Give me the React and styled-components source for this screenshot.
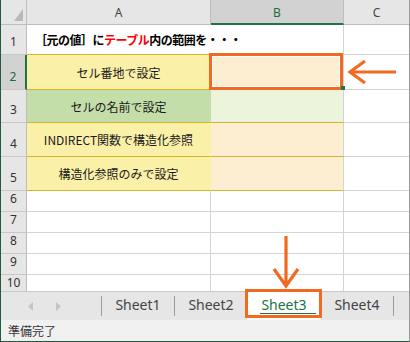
import React from 'react';
import styled, { createGlobalStyle } from 'styled-components';

const ORANGE = '#f26a21';
const GOLD = '#d4b428';
const GRID = '#d4d4d4';
const HEAD_LINE = '#bdbdbd';
const GREEN = '#217346';

const Global = createGlobalStyle`
  html, body { margin: 0; padding: 0; background: #fff; }
  body { font-family: "Noto Sans", "Noto Sans CJK JP", sans-serif; }
`;

const Window = styled.div`
  position: relative;
  width: 410px;
  height: 342px;
  box-sizing: border-box;
  border-left: 1px solid #1f5c3b;
  border-right: 1px solid #9a9a9a;
  border-bottom: 1px solid #1f5c3b;
  display: flex;
  flex-direction: column;
  overflow: hidden;
`;

const Sheet = styled.div`
  display: grid;
  grid-template-columns: 26px 184px 133px 65px;
  grid-template-rows: 25px 30px 35px 33px 34px 34px 21px 21px 21px 21px 21px;
  height: 291px;
  flex: none;
  overflow: hidden;
`;

const Corner = styled.div`
  box-sizing: border-box;
  background: #e6e6e6;
  border-right: 1px solid ${HEAD_LINE};
  border-bottom: 1px solid ${HEAD_LINE};
  display: flex;
  align-items: flex-end;
  justify-content: flex-end;
  padding: 0 3px 3px 0;
`;

const ColHead = styled.div`
  box-sizing: border-box;
  background: ${p => (p.$sel ? '#d2d2d2' : '#e6e6e6')};
  border-right: ${p => (p.$last ? 'none' : `1px solid ${HEAD_LINE}`)};
  border-bottom: ${p => (p.$sel ? `2px solid ${GREEN}` : `1px solid ${HEAD_LINE}`)};
  display: flex;
  align-items: center;
  justify-content: center;
  font: 12px "Noto Sans", sans-serif;
  color: ${p => (p.$sel ? '#1d6b40' : '#444')};
  padding-top: ${p => (p.$sel ? '1px' : '0')};
`;

const RowHead = styled.div`
  box-sizing: border-box;
  background: ${p => (p.$sel ? '#d2d2d2' : '#e6e6e6')};
  border-right: ${p => (p.$sel ? `2px solid ${GREEN}` : `1px solid ${HEAD_LINE}`)};
  border-bottom: 1px solid #c8c8c8;
  display: flex;
  align-items: flex-end;
  justify-content: center;
  padding-bottom: 5px;
  font: 12px "Noto Sans", sans-serif;
  line-height: 14px;
  color: ${p => (p.$sel ? '#1d6b40' : '#333')};
`;

const Cell = styled.div`
  box-sizing: border-box;
  position: relative;
  display: flex;
  align-items: center;
  justify-content: ${p => (p.$left ? 'flex-start' : 'center')};
  padding-left: ${p => (p.$left ? '8px' : '0')};
  background: ${p => p.$fill || '#fff'};
  border-right: ${p => (p.$noRight ? 'none' : `1px solid ${p.$rightColor || GRID}`)};
  border-bottom: 1px solid ${p => p.$bottomColor || GRID};
  font: 12px "Noto Sans CJK JP", sans-serif;
  color: #1a1a1a;
  white-space: nowrap;
`;

const Title = styled.span`
  font: 700 12px "Noto Sans CJK JP", sans-serif;
  letter-spacing: -0.5px;
  color: #000;
  position: relative;
  z-index: 1;
`;

const Red = styled.span`
  color: #ff0000;
`;

const Selection = styled.div`
  position: absolute;
  left: -2px;
  top: -2px;
  right: 0;
  bottom: -1px;
  border: 3px solid ${ORANGE};
  box-shadow: inset 0 0 0 1px #fff;
  z-index: 2;
`;

const FillHandle = styled.div`
  position: absolute;
  right: -5px;
  bottom: -3px;
  width: 4px;
  height: 4px;
  background: ${GREEN};
`;

const ArrowCell = styled(Cell)`
  justify-content: flex-start;
  padding-left: 3px;
`;

const DownArrow = styled.svg`
  position: absolute;
  left: 271px;
  top: 235px;
  z-index: 5;
`;

const TabBar = styled.div`
  box-sizing: border-box;
  height: 29px;
  flex: none;
  background: #e6e6e6;
  border-top: 1px solid #c8c8c8;
  display: flex;
  align-items: center;
`;

const Nav = styled.div`
  width: 100px;
  display: flex;
  align-items: center;
  gap: 23px;
  padding-left: 27px;
  box-sizing: border-box;
`;

const Sep = styled.div`
  width: 1px;
  height: 20px;
  background: #9c9c9c;
  flex: none;
`;

const Tab = styled.div`
  position: relative;
  box-sizing: border-box;
  width: ${p => (p.$active ? '74px' : '72px')};
  align-self: stretch;
  display: flex;
  align-items: center;
  justify-content: center;
  background: ${p => (p.$active ? '#fff' : 'transparent')};
  font: 14px "Noto Sans", sans-serif;
  color: ${p => (p.$active ? GREEN : '#444')};
  flex: none;
  padding-bottom: 4px;
`;

const Underline = styled.div`
  position: absolute;
  left: 13px;
  right: 5px;
  bottom: 6px;
  height: 1px;
  background: ${GREEN};
`;

const TabMark = styled.div`
  position: absolute;
  left: -2px;
  right: -1px;
  top: -3px;
  bottom: 2px;
  border: 3px solid ${ORANGE};
  z-index: 3;
`;

const Status = styled.div`
  box-sizing: border-box;
  height: 21px;
  flex: none;
  background: #f0f0f0;
  display: flex;
  align-items: center;
  padding-left: 7px;
  font: 12px "Noto Sans CJK JP", sans-serif;
  color: #333;
`;

const YELLOW = '#faf0a8';
const ORANGE_FILL = '#fdeed2';
const GREEN_FILL = '#c4deaa';
const LIGHT_GREEN = '#ecf4dc';

const rows = [
  { n: 1 },
  { n: 2, a: 'セル番地で設定', aFill: YELLOW, bFill: ORANGE_FILL, sel: true },
  { n: 3, a: 'セルの名前で設定', aFill: GREEN_FILL, bFill: LIGHT_GREEN },
  { n: 4, a: 'INDIRECT関数で構造化参照', aFill: YELLOW, bFill: ORANGE_FILL },
  { n: 5, a: '構造化参照のみで設定', aFill: YELLOW, bFill: ORANGE_FILL },
  { n: 6 },
  { n: 7 },
  { n: 8 },
  { n: 9 },
  { n: 10 },
];

export default function App() {
  return (
    <>
      <Global />
      <Window>
        <Sheet>
          <Corner>
            <svg width="9" height="12" viewBox="0 0 9 12">
              <polygon points="9,0 9,12 0,12" fill="#b8b8b8" />
            </svg>
          </Corner>
          <ColHead>A</ColHead>
          <ColHead $sel>B</ColHead>
          <ColHead $last>C</ColHead>

          {rows.map(r => {
            const goldBottom = r.n >= 1 && r.n <= 5;
            if (r.n === 1) {
              return (
                <React.Fragment key={r.n}>
                  <RowHead>{r.n}</RowHead>
                  <Cell $left $rightColor="transparent" $bottomColor={GOLD}>
                    <Title>
                      ［元の値］に<Red>テーブル</Red>内の範囲を・・・
                    </Title>
                  </Cell>
                  <Cell $fill="transparent" $bottomColor={GOLD} />
                  <Cell $noRight />
                </React.Fragment>
              );
            }
            return (
              <React.Fragment key={r.n}>
                <RowHead $sel={r.sel}>{r.n}</RowHead>
                <Cell
                  $fill={r.aFill}
                  $rightColor={r.aFill ? 'transparent' : GRID}
                  $bottomColor={goldBottom ? GOLD : GRID}
                >
                  {r.a}
                </Cell>
                <Cell $fill={r.bFill} $bottomColor={goldBottom ? GOLD : GRID}>
                  {r.sel && (
                    <Selection>
                      <FillHandle />
                    </Selection>
                  )}
                </Cell>
                {r.sel ? (
                  <ArrowCell $noRight>
                    <svg width="50" height="26" viewBox="0 0 50 26">
                      <path
                        d="M3 13 H49 M18 2 L3 13 L18 24"
                        fill="none"
                        stroke={ORANGE}
                        strokeWidth="3.2"
                      />
                    </svg>
                  </ArrowCell>
                ) : (
                  <Cell $noRight />
                )}
              </React.Fragment>
            );
          })}
        </Sheet>

        <TabBar>
          <Nav>
            <svg width="5" height="9" viewBox="0 0 5 9">
              <polygon points="5,0 5,9 0,4.5" fill="#c4c4c4" />
            </svg>
            <svg width="5" height="9" viewBox="0 0 5 9">
              <polygon points="0,0 0,9 5,4.5" fill="#c4c4c4" />
            </svg>
          </Nav>
          <Sep />
          <Tab>Sheet1</Tab>
          <Sep />
          <Tab>Sheet2</Tab>
          <Tab $active>
            Sheet3
            <Underline />
            <TabMark />
          </Tab>
          <Tab>Sheet4</Tab>
          <Sep />
        </TabBar>

        <Status>準備完了</Status>

        <DownArrow width="28" height="54" viewBox="0 0 28 54">
          <path
            d="M14 1 V51 M2 34 L14 51 L26 34"
            fill="none"
            stroke={ORANGE}
            strokeWidth="3.2"
          />
        </DownArrow>
      </Window>
    </>
  );
}
